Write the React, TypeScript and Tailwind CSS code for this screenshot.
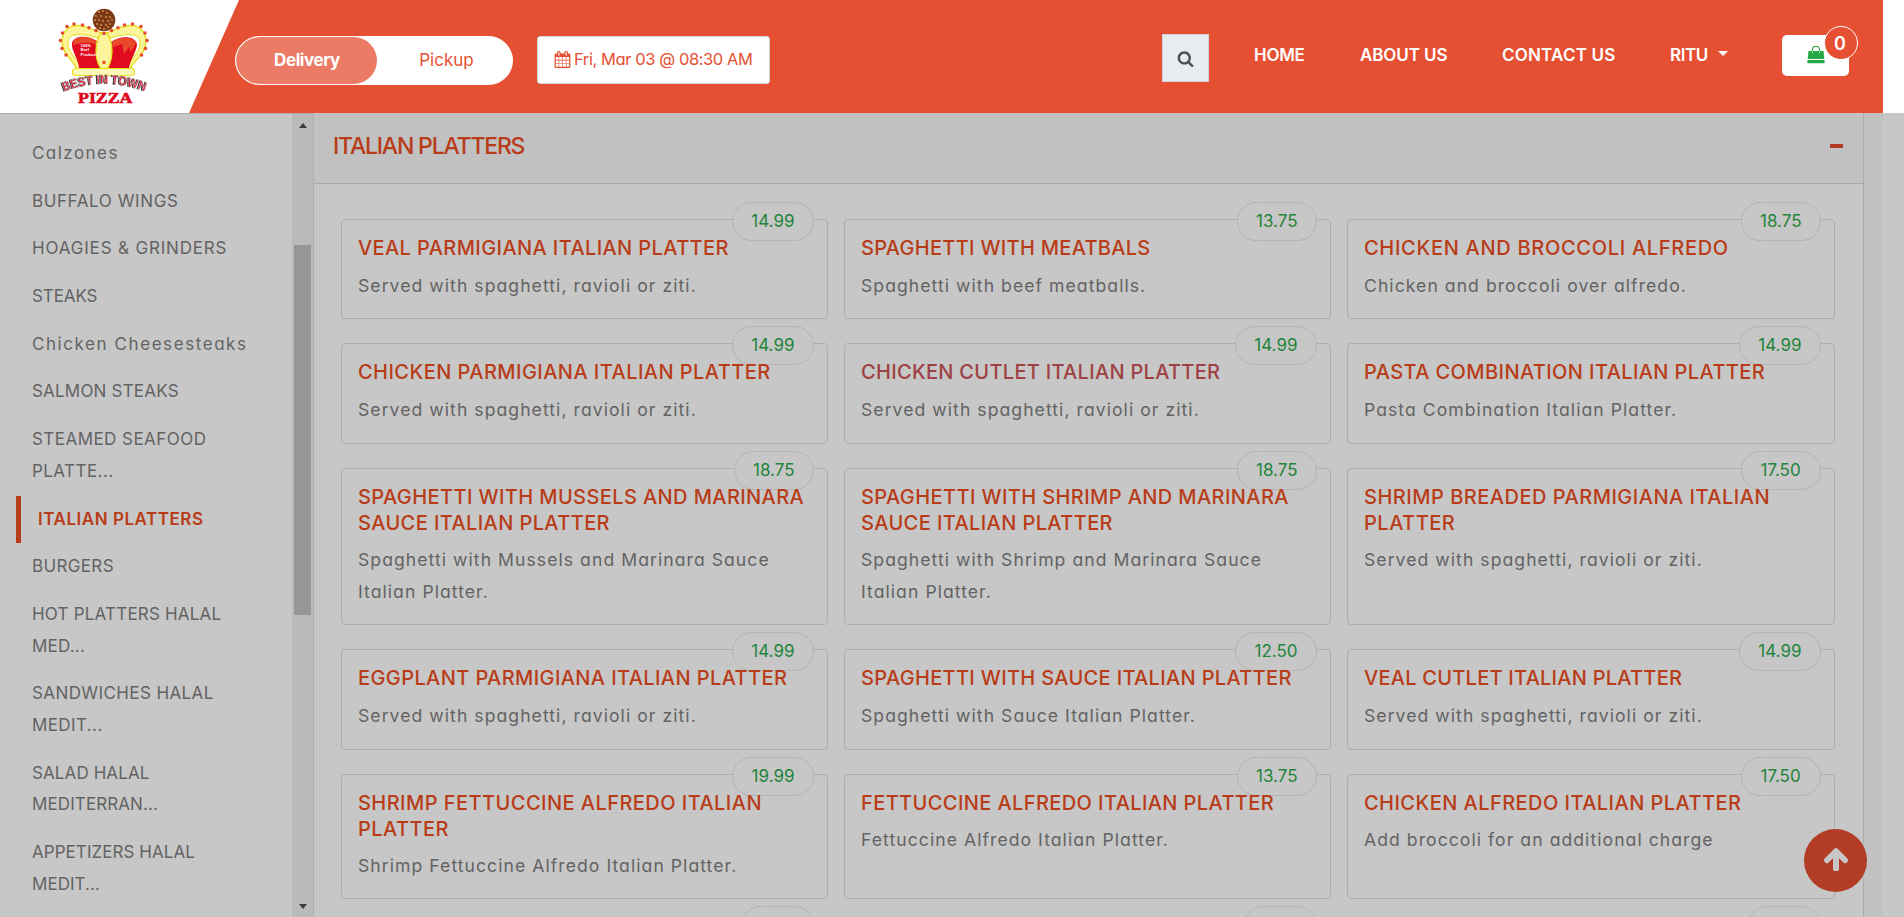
import React from "react";

type Category = { label: string; spacing: string; active?: boolean };
type Item = { price: string; name: string; text: string; spacing?: string; hovered?: boolean };

const categories: Category[] = [
  { label: "Calzones", spacing: "tracking-[1.45px]" },
  { label: "BUFFALO WINGS", spacing: "tracking-[0.6px]" },
  { label: "HOAGIES & GRINDERS", spacing: "tracking-[0.83px]" },
  { label: "STEAKS", spacing: "tracking-[-0.1px]" },
  { label: "Chicken Cheesesteaks", spacing: "tracking-[1.57px]" },
  { label: "SALMON STEAKS", spacing: "tracking-[0.2px]" },
  { label: "STEAMED SEAFOOD PLATTE...", spacing: "tracking-[0.45px]" },
  { label: "ITALIAN PLATTERS", spacing: "tracking-[0.53px]", active: true },
  { label: "BURGERS", spacing: "tracking-[0.35px]" },
  { label: "HOT PLATTERS HALAL MED...", spacing: "tracking-[0.2px]" },
  { label: "SANDWICHES HALAL MEDIT...", spacing: "tracking-[0.4px]" },
  { label: "SALAD HALAL MEDITERRAN...", spacing: "tracking-[0.1px]" },
  { label: "APPETIZERS HALAL MEDIT...", spacing: "tracking-[0.05px]" },
];

const served = "Served with spaghetti, ravioli or ziti.";

const items: Item[] = [
  { price: "14.99", name: "VEAL PARMIGIANA ITALIAN PLATTER", text: served },
  { price: "13.75", name: "SPAGHETTI WITH MEATBALS", text: "Spaghetti with beef meatballs.", spacing: "tracking-[0.3px]" },
  { price: "18.75", name: "CHICKEN AND BROCCOLI ALFREDO", text: "Chicken and broccoli over alfredo.", spacing: "tracking-[0.7px]" },
  { price: "14.99", name: "CHICKEN PARMIGIANA ITALIAN PLATTER", text: served, spacing: "tracking-[0.45px]" },
  { price: "14.99", name: "CHICKEN CUTLET ITALIAN PLATTER", text: served, spacing: "tracking-[0.3px]", hovered: true },
  { price: "14.99", name: "PASTA COMBINATION ITALIAN PLATTER", text: "Pasta Combination Italian Platter." },
  { price: "18.75", name: "SPAGHETTI WITH MUSSELS AND MARINARA SAUCE ITALIAN PLATTER", text: "Spaghetti with Mussels and Marinara Sauce Italian Platter." },
  { price: "18.75", name: "SPAGHETTI WITH SHRIMP AND MARINARA SAUCE ITALIAN PLATTER", text: "Spaghetti with Shrimp and Marinara Sauce Italian Platter." },
  { price: "17.50", name: "SHRIMP BREADED PARMIGIANA ITALIAN PLATTER", text: served, spacing: "tracking-[0.5px]" },
  { price: "14.99", name: "EGGPLANT PARMIGIANA ITALIAN PLATTER", text: served },
  { price: "12.50", name: "SPAGHETTI WITH SAUCE ITALIAN PLATTER", text: "Spaghetti with Sauce Italian Platter.", spacing: "tracking-[0.33px]" },
  { price: "14.99", name: "VEAL CUTLET ITALIAN PLATTER", text: served, spacing: "tracking-[0.25px]" },
  { price: "19.99", name: "SHRIMP FETTUCCINE ALFREDO ITALIAN PLATTER", text: "Shrimp Fettuccine Alfredo Italian Platter.", spacing: "tracking-[0.45px]" },
  { price: "13.75", name: "FETTUCCINE ALFREDO ITALIAN PLATTER", text: "Fettuccine Alfredo Italian Platter." },
  { price: "17.50", name: "CHICKEN ALFREDO ITALIAN PLATTER", text: "Add broccoli for an additional charge", spacing: "tracking-[0.45px]" },
];

const beads: [number, number][] = [
  [96, 30.5], [89, 27.8], [82.5, 25], [74, 24], [67, 26.5], [62.5, 33], [60.5, 40.5], [62, 48.5], [66, 55],
  [111.5, 30.5], [118, 27.8], [124.5, 25], [132.5, 24], [141, 26.5], [145, 33], [147, 40.5], [145.5, 48.5], [141.5, 55],
  [104, 33.5], [104, 62.5],
];

const specks: [number, number][] = [
  [99, 12], [103, 11], [107, 13], [96, 16], [101, 16], [106, 17], [110, 17], [95, 20], [99, 20], [103, 21],
  [108, 21], [112, 20], [97, 24], [101, 25], [106, 25], [110, 24], [100, 28], [104, 29], [108, 27],
];

function Logo() {
  return (
    <svg viewBox="50 0 110 113" className="h-[113px] w-[110px]" aria-label="Best in Town Pizza">
      <circle cx="104" cy="20" r="11.3" fill="#7a3818" />
      {specks.map(([x, y]) => (
        <circle key={`${x}-${y}`} cx={x} cy={y} r="1.1" fill="#c98a3c" />
      ))}
      <path
        d="M77 70C76 62 61 54 62 40C63 28 73 24 82 26C92 28 99 33 104 34C109 33 116 28 126 26C135 24 145 28 146 40C147 54 131 62 130 70Z"
        fill="#fbf49a" stroke="#e3df1c" strokeWidth="1.4"
      />
      <path d="M80 68C79 60 66 51 68 41C70 33 81 33 98 38L98 68Z" fill="#fff" stroke="#e3df1c" strokeWidth="1" />
      <path d="M128 68C129 60 142 51 140 41C138 33 127 33 110 38L110 68Z" fill="#fff" stroke="#e3df1c" strokeWidth="1" />
      <path d="M79 68C79 60 71 51 72 43C74 35 88 35 97 41L100 68Z" fill="#e10a1e" />
      <path d="M74 40C80 35 91 37 97 42L97 45C89 41 80 43 73 45Z" fill="#e8492b" />
      <path d="M129 68C130 60 137 51 137 44C134 35 120 36 111 42L109 68Z" fill="#e10a1e" />
      <path d="M112 42C120 36 131 36 136 43L131 52L129 47L124 54L122 44L113 47Z" fill="#e8492b" />
      <ellipse cx="104" cy="51" rx="8" ry="18.5" fill="#fbf49a" stroke="#e3df1c" strokeWidth="1.3" />
      <rect x="72.5" y="68.5" width="62" height="7" rx="3.5" fill="#fcf9b8" stroke="#e3df1c" strokeWidth="1.2" />
      {beads.map(([x, y]) => (
        <circle key={`${x}-${y}`} cx={x} cy={y} r="1.8" fill="#e8492b" />
      ))}
      <g fill="#fff" fontFamily="Liberation Sans" fontWeight="700" fontSize="4">
        <text x="80.500" y="46.500">100%</text>
        <text x="80.500" y="51">Beef</text>
        <text x="80.500" y="55.500">Products</text>
      </g>
      <path id="logo-arc" d="M64 91.500Q104 76 146 91.500" fill="none" />
      <text
        className="[filter:drop-shadow(-1px_0.5px_0_#222)]"
        fontFamily="Liberation Sans" fontWeight="700" fontSize="12.500" fill="#e0102a" stroke="#c9bcbe" strokeWidth="0.600"
      >
        <textPath href="#logo-arc" textLength="83" lengthAdjust="spacingAndGlyphs">BEST IN TOWN</textPath>
      </text>
      <text
        x="78" y="102.800" textLength="54.500" lengthAdjust="spacingAndGlyphs" fill="#e0041c" stroke="#e0041c" strokeWidth="0.600"
        fontFamily="Liberation Serif" fontWeight="700" fontSize="15.500"
      >
        PIZZA
      </text>
    </svg>
  );
}

function CalendarIcon() {
  return (
    <svg viewBox="0 0 1792 1792" className="h-[17px] w-[17px]" fill="currentColor">
      <path d="M192 1664h288v-288h-288v288zm352 0h320v-288h-320v288zm-352-352h288v-320h-288v320zm352 0h320v-320h-320v320zm-352-384h288v-288h-288v288zm736 736h320v-288h-320v288zm-384-736h320v-288h-320v288zm768 736h288v-288h-288v288zm-384-352h320v-320h-320v320zm-352-864v-288q0-13-9.500-22.500t-22.500-9.500h-64q-13 0-22.500 9.500t-9.500 22.500v288q0 13 9.500 22.500t22.500 9.500h64q13 0 22.500-9.500t9.500-22.500zm736 864h288v-320h-288v320zm-384-384h320v-288h-320v288zm384 0h288v-288h-288v288zm32-480v-288q0-13-9.500-22.500t-22.500-9.500h-64q-13 0-22.500 9.500t-9.500 22.500v288q0 13 9.500 22.500t22.500 9.500h64q13 0 22.500-9.500t9.500-22.500zm384-64v1280q0 52-38 90t-90 38h-1408q-52 0-90-38t-38-90v-1280q0-52 38-90t90-38h128v-96q0-66 47-113t113-47h64q66 0 113 47t47 113v96h384v-96q0-66 47-113t113-47h64q66 0 113 47t47 113v96h128q52 0 90 38t38 90z" />
    </svg>
  );
}

function SearchIcon() {
  return (
    <svg viewBox="0 0 1792 1792" className="h-[17px] w-[17px]" fill="currentColor">
      <path d="M1216 832q0-185-131.500-316.500t-316.500-131.500-316.500 131.500-131.500 316.500 131.500 316.500 316.500 131.500 316.500-131.500 131.500-316.500zm512 832q0 52-38 90t-90 38q-54 0-90-38l-343-342q-179 124-399 124-143 0-273.500-55.500t-225-150-150-225-55.500-273.500 55.500-273.500 150-225 225-150 273.500-55.500 273.500 55.500 225 150 150 225 55.500 273.500q0 220-124 399l343 343q37 37 37 90z" />
    </svg>
  );
}

function ArrowUpIcon() {
  return (
    <svg viewBox="0 0 1792 1792" className="h-7 w-7" fill="currentColor">
      <path d="M1675 971q0 51-37 90l-75 75q-38 38-91 38-54 0-90-38l-294-293v704q0 52-37.500 84.500t-90.500 32.500h-128q-53 0-90.500-32.500t-37.500-84.500v-704l-294 293q-36 38-90 38t-90-38l-75-75q-38-38-38-90 0-53 38-91l651-651q35-37 90-37 54 0 91 37l651 651q37 39 37 91z" />
    </svg>
  );
}

function BagIcon() {
  return (
    <svg viewBox="0 0 18 19" className="h-[19px] w-[18px]">
      <path d="M5.500 8.500V4.700a3.500 3.500 0 0 1 7 0V8.500" fill="none" stroke="#28a745" strokeWidth="1.100" />
      <path d="M1.500 6H16.500L17.300 14H0.700Z" fill="#28a745" />
      <path d="M0.500 15H17.500L17.700 17.500Q17.700 18.300 17 18.300H1Q0.300 18.300 0.300 17.500Z" fill="#28a745" />
      <path d="M5.500 6V8.500M12.500 6V8.500" stroke="#9fe0ae" strokeWidth="1" />
    </svg>
  );
}

function Header() {
  return (
    <header className="relative flex h-[113px] shrink-0 bg-white">
      <div className="flex w-[189px] shrink-0 pl-[50px]">
        <Logo />
      </div>
      <div className="mr-[21px] flex flex-1 items-start bg-[#e65032] pl-[46px] text-[17px] text-[#e65032] [clip-path:polygon(50px_0,100%_0,100%_100%,0_100%)]">
        <div className="mt-9 flex h-[49px] w-[278px] overflow-hidden rounded-[25px] border border-white bg-white leading-[47px]">
          <span className="w-[141px] rounded-[24px] bg-[#ec7b66] pl-px text-center font-bold tracking-[-0.4px] text-white">Delivery</span>
          <span className="flex-1 pl-1 text-center">Pickup</span>
        </div>
        <div className="mt-9 ml-6 flex h-12 w-[233px] items-center rounded-[3px] border border-[#ced4da] bg-white pb-px pl-4 text-[16.5px]">
          <CalendarIcon />
          <span className="ml-[3px] tracking-[-0.42px] whitespace-nowrap">Fri, Mar 03 @ 08:30 AM</span>
        </div>
        <div className="mt-[34px] ml-[392px] flex h-12 w-[47px] items-center justify-center border border-[#ced4da] bg-[#e9ecef] text-[#495057]">
          <SearchIcon />
        </div>
        <nav className="mt-[42px] ml-[45px] flex leading-[26px] font-semibold whitespace-nowrap text-white">
          <span className="w-[106px] tracking-[-0.3px]">HOME</span>
          <span className="w-[142px] tracking-[-0.1px]">ABOUT US</span>
          <span className="w-[168px] tracking-[0.2px]">CONTACT US</span>
          <span className="flex items-center gap-[10px] tracking-[-0.4px]">
            RITU
            <i className="-mt-1 border-x-[5px] border-t-[5px] border-x-transparent border-t-white" />
          </span>
        </nav>
        <div className="relative mt-[35px] mr-[34px] ml-auto flex h-[41px] w-[67px] rounded-[5px] bg-white pt-[10px] pl-[25px]">
          <BagIcon />
          <span className="absolute -top-[9px] left-[42px] flex h-[34px] w-[34px] items-center justify-center rounded-full border border-white bg-[#e65032] pr-0.5 text-[18px] font-semibold text-white">
            0
          </span>
        </div>
      </div>
    </header>
  );
}

function Sidebar() {
  return (
    <aside className="flex w-[314px] shrink-0 border-t border-r border-[#adadad]">
      <ul className="w-[292px] pt-[16px] pl-4">
        {categories.map((c) => (
          <li
            key={c.label}
            className={
              c.active
                ? "w-[230px] border-l-[5px] border-[#b83c18] py-2 pl-[17px] text-[17px] leading-[31.68px] font-semibold text-[#b83c18]"
                : "w-[250px] py-2 pl-4 text-[17px] leading-[31.68px] text-[#636363]"
            }
          >
            <span className={c.spacing}>{c.label}</span>
          </li>
        ))}
      </ul>
      <div className="flex w-[21px] flex-col items-center bg-[#bababa]">
        <i className="mt-[9px] border-x-[4.5px] border-b-[5px] border-x-transparent border-b-[#3c3c3c]" />
        <i className="mt-[117px] h-[370px] w-[17px] bg-[#969696]" />
        <i className="mt-auto mb-2 border-x-[4.5px] border-t-[5px] border-x-transparent border-t-[#3c3c3c]" />
      </div>
    </aside>
  );
}

const pill =
  "absolute -top-[18px] right-[13px] h-[39px] min-w-[80px] rounded-[20px] border border-[#b2b4b6] bg-[#c7c7c7] px-[18.5px] text-[17px] leading-[36px] text-[#23843b]";

function Card({ item }: { item: Item }) {
  return (
    <article className="relative min-h-[100.4px] rounded border border-[#acaeb0] px-4 pt-[15px] pb-[16.5px]">
      <span className={pill}>{item.price}</span>
      <h3 className={`relative text-[20px] leading-[26px] font-medium ${item.hovered ? "text-[#9e4144]" : "text-[#b83c18]"}`}>
        <span className={item.spacing ?? "tracking-[0.4px]"}>{item.name}</span>
      </h3>
      <p className="mt-[8.5px] text-[17.6px] leading-[31.68px] tracking-[1.05px] text-[#636363]">{item.text}</p>
    </article>
  );
}

export default function App() {
  return (
    <div className="flex h-[917px] w-full flex-col overflow-hidden bg-[#c7c7c7] font-['Inter','Liberation_Sans',sans-serif] [font-feature-settings:'cv11']">
      <Header />
      <div className="flex min-h-0 flex-1">
        <Sidebar />
        <main className="flex-1 overflow-hidden border-r border-[#acacac]">
          <div className="flex h-[71px] items-center justify-between border-b border-[#a8a8a8] bg-[#c1c1c1] pr-5 pb-[4px] pl-[19px]">
            <h2 className="text-[23px] font-[550] tracking-[-1.2px] text-[#b83c18]">ITALIAN PLATTERS</h2>
            <span className="h-1 w-[13px] bg-[#b03a26]" />
          </div>
          <div className="grid grid-cols-[487px_487px_488px] gap-x-4 gap-y-6 pt-[35px] pl-[27px]">
            {items.map((item) => (
              <Card key={item.name} item={item} />
            ))}
            {[0, 1, 2].map((n) => (
              <article key={n} className="relative h-[100px] rounded border border-[#acaeb0]">
                <span className="absolute -top-[18px] right-[13px] h-[39px] w-[73px] rounded-[20px] border border-[#b2b4b6] bg-[#c7c7c7]" />
              </article>
            ))}
          </div>
        </main>
        <div className="w-[19px] shrink-0 bg-[#c1c1c1]" />
        <div className="w-[21px] shrink-0" />
      </div>
      <button className="fixed right-[37px] bottom-[25px] flex h-[63px] w-[63px] items-center justify-center rounded-full bg-[#b33c27] pb-1 text-[#c7c7c7]">
        <ArrowUpIcon />
      </button>
    </div>
  );
}
